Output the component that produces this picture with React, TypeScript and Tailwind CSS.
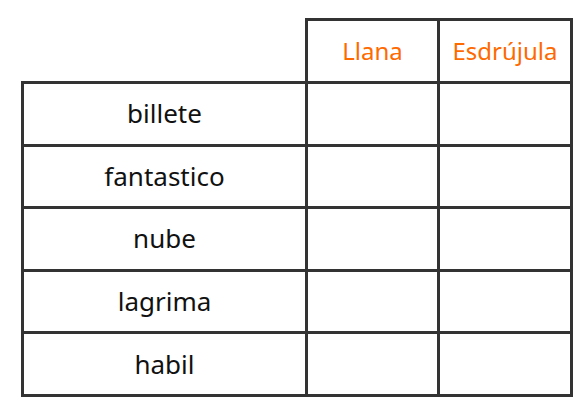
const WORDS = ["billete", "fantastico", "nube", "lagrima", "habil"];

export default function App() {
  return (
    <div className="w-[586px] h-[412px] bg-white pl-[21px] pt-[18px] font-['Noto_Sans',sans-serif]">
      <table className="border-collapse table-fixed">
        <thead>
          <tr className="h-[63px]">
            <th className="w-[284px] p-0 border-0" />
            <th className="w-[132px] p-0 border-[3px] border-[#333] text-[24px] font-normal text-[#ff6a00]">
              Llana
            </th>
            <th className="w-[133px] p-0 border-[3px] border-[#333] text-[24px] font-normal text-[#ff6a00]">
              Esdrújula
            </th>
          </tr>
        </thead>
        <tbody>
          {WORDS.map((word) => (
            <tr key={word} className="h-[62.6px]">
              <td className="p-0 border-[3px] border-[#333] text-center text-[26px] text-[#111]">
                {word}
              </td>
              <td className="p-0 border-[3px] border-[#333]" />
              <td className="p-0 border-[3px] border-[#333]" />
            </tr>
          ))}
        </tbody>
      </table>
    </div>
  );
}
